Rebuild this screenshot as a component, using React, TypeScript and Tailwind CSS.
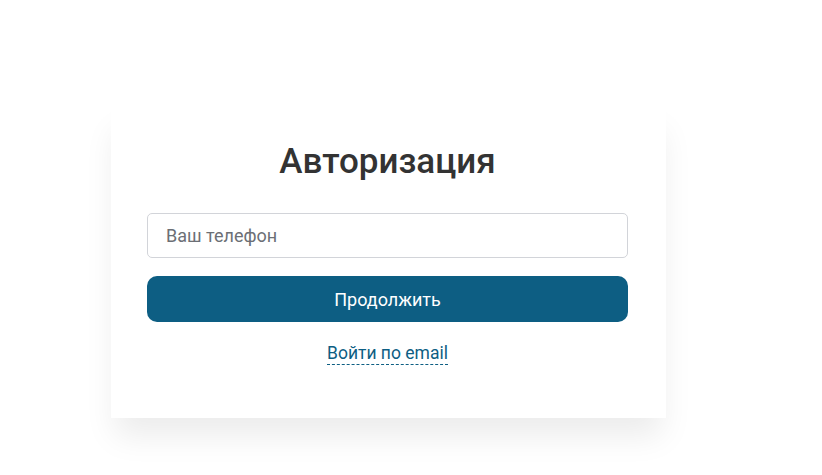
import React, { useState } from "react";

const App: React.FC = () => {
  const [phone, setPhone] = useState("");

  return (
    <div className="min-h-screen bg-white pt-[105px] pl-[111px] font-['Roboto',sans-serif]">
      <div className="w-[555px] bg-white pl-[36px] pr-[38px] pt-[35px] pb-[52px] shadow-[0_22px_30px_-4px_rgba(0,0,0,0.08)]">
        <h1 className="text-center text-[35px] leading-[43px] font-medium text-[#333333]">
          Авторизация
        </h1>

        {/* Phone input */}
        <input
          type="tel"
          value={phone}
          onChange={(e) => setPhone(e.target.value)}
          placeholder="Ваш телефон"
          className="mt-[30px] block h-[45px] w-full rounded-[5px] border border-[#d2d4d9] px-[18px] text-[18px] text-[#333] placeholder:text-[#6c6f75] focus:outline-none"
        />

        {/* Submit */}
        <button
          type="button"
          className="mt-[18px] block h-[46px] w-full rounded-[10px] bg-[#0d5e83] text-[18px] font-normal text-white"
        >
          Продолжить
        </button>

        {/* Switch to email */}
        <div className="mt-[20px] text-center">
          <a
            href="#"
            className="inline-block border-b border-dashed border-[#0d5e83] text-[17.5px] leading-[22px] text-[#0d5e83]"
          >
            Войти по email
          </a>
        </div>
      </div>
    </div>
  );
};

export default App;
